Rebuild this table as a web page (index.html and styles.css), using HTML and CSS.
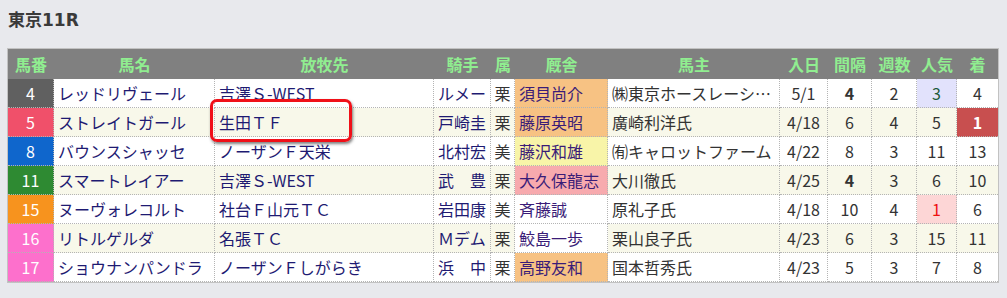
FILE: index.html
```html
<!DOCTYPE html>
<html lang="ja">
<head>
<meta charset="utf-8">
<title>東京11R</title>
<link rel="stylesheet" href="styles.css">
</head>
<body>
<div class="title">東京11R</div>
<div class="board">
  <table class="race">
    <thead>
      <tr>
        <th class="w-num">馬番</th>
        <th class="w-name">馬名</th>
        <th class="w-farm">放牧先</th>
        <th class="w-jockey">騎手</th>
        <th class="w-area">属</th>
        <th class="w-stable">厩舎</th>
        <th class="w-owner">馬主</th>
        <th class="w-in">入日</th>
        <th class="w-int">間隔</th>
        <th class="w-week">週数</th>
        <th class="w-pop">人気</th>
        <th class="w-fin">着</th>
      </tr>
    </thead>
    <tbody>
      <tr class="odd">
        <td class="num f4">4</td>
        <td class="name">レッドリヴェール</td>
        <td class="farm">吉澤Ｓ-WEST</td>
        <td class="jockey">ルメー</td>
        <td class="area">栗</td>
        <td class="stable st-orange">須貝尚介</td>
        <td class="owner">㈱東京ホースレーシ…</td>
        <td class="ctr">5/1</td>
        <td class="ctr strong">4</td>
        <td class="ctr">2</td>
        <td class="ctr pop-blue">3</td>
        <td class="ctr last">4</td>
      </tr>
      <tr class="even">
        <td class="num f5">5</td>
        <td class="name">ストレイトガール</td>
        <td class="farm">生田ＴＦ</td>
        <td class="jockey">戸崎圭</td>
        <td class="area">栗</td>
        <td class="stable st-orange">藤原英昭</td>
        <td class="owner">廣崎利洋氏</td>
        <td class="ctr">4/18</td>
        <td class="ctr">6</td>
        <td class="ctr">4</td>
        <td class="ctr">5</td>
        <td class="ctr last win">1</td>
      </tr>
      <tr class="odd">
        <td class="num f8">8</td>
        <td class="name">バウンスシャッセ</td>
        <td class="farm">ノーザンＦ天栄</td>
        <td class="jockey">北村宏</td>
        <td class="area">美</td>
        <td class="stable st-yellow">藤沢和雄</td>
        <td class="owner">㈲キャロットファーム</td>
        <td class="ctr">4/22</td>
        <td class="ctr">8</td>
        <td class="ctr">3</td>
        <td class="ctr">11</td>
        <td class="ctr last">13</td>
      </tr>
      <tr class="even">
        <td class="num f11">11</td>
        <td class="name">スマートレイアー</td>
        <td class="farm">吉澤Ｓ-WEST</td>
        <td class="jockey">武　豊</td>
        <td class="area">栗</td>
        <td class="stable st-pink">大久保龍志</td>
        <td class="owner">大川徹氏</td>
        <td class="ctr">4/25</td>
        <td class="ctr strong">4</td>
        <td class="ctr">3</td>
        <td class="ctr">6</td>
        <td class="ctr last">10</td>
      </tr>
      <tr class="odd">
        <td class="num f15">15</td>
        <td class="name">ヌーヴォレコルト</td>
        <td class="farm">社台Ｆ山元ＴＣ</td>
        <td class="jockey">岩田康</td>
        <td class="area">美</td>
        <td class="stable">斉藤誠</td>
        <td class="owner">原礼子氏</td>
        <td class="ctr">4/18</td>
        <td class="ctr">10</td>
        <td class="ctr">4</td>
        <td class="ctr pop-red">1</td>
        <td class="ctr last">6</td>
      </tr>
      <tr class="even">
        <td class="num f16">16</td>
        <td class="name">リトルゲルダ</td>
        <td class="farm">名張ＴＣ</td>
        <td class="jockey">Ｍデム</td>
        <td class="area">栗</td>
        <td class="stable">鮫島一歩</td>
        <td class="owner">栗山良子氏</td>
        <td class="ctr">4/23</td>
        <td class="ctr">6</td>
        <td class="ctr">3</td>
        <td class="ctr">15</td>
        <td class="ctr last">11</td>
      </tr>
      <tr class="odd">
        <td class="num f16">17</td>
        <td class="name">ショウナンパンドラ</td>
        <td class="farm">ノーザンＦしがらき</td>
        <td class="jockey">浜　中</td>
        <td class="area">栗</td>
        <td class="stable st-orange">高野友和</td>
        <td class="owner">国本哲秀氏</td>
        <td class="ctr">4/23</td>
        <td class="ctr">5</td>
        <td class="ctr">3</td>
        <td class="ctr">7</td>
        <td class="ctr last">8</td>
      </tr>
    </tbody>
  </table>
  <div class="highlight"></div>
</div>
</body>
</html>
```
FILE: styles.css
```css
html, body {
  margin: 0;
  padding: 0;
  background: #e8e9ed;
}

body {
  padding: 8px 8px 0 7px;
  font-family: "Noto Sans CJK JP", "Noto Sans", sans-serif;
  font-size: 16px;
  color: #333;
}

.title {
  padding-left: 1px;
  height: 24px;
  line-height: 24px;
  margin-bottom: 16px;
  font-family: "DejaVu Sans", "Noto Sans CJK JP", sans-serif;
  font-size: 17px;
  font-weight: bold;
  color: #3a3a3a;
}

.board {
  position: relative;
  width: 990px;
  border: 1px solid #c2c2c2;
  background: #fff;
}

.race {
  width: 990px;
  table-layout: fixed;
  border-collapse: separate;
  border-spacing: 0;
}

.race th,
.race td {
  box-sizing: border-box;
  padding: 0 4px;
  line-height: 20px;
  white-space: nowrap;
  overflow: hidden;
  vertical-align: middle;
}

.race thead tr {
  height: 30px;
}

.race th {
  background: #808080;
  color: #90ee90;
  font-weight: bold;
  text-align: center;
  padding: 0;
}

.w-num { width: 46px; }
.w-name { width: 161px; }
.w-farm { width: 219px; }
.w-jockey { width: 57px; }
.w-area { width: 24px; }
.w-stable { width: 93px; }
.w-owner { width: 172px; }
.w-in { width: 48px; }
.w-int { width: 44px; }
.w-week { width: 45px; }
.w-pop { width: 40px; }
.w-fin { width: 41px; }

.race tbody tr {
  height: 29px;
}

.race td {
  border-right: 1px dotted #b4b4b4;
  border-bottom: 1px dotted #b4b4b4;
}

.race td.last {
  border-right: none;
}

.odd td { background: #ffffff; }
.even td { background: #f8f8ea; }

.race td.num {
  text-align: center;
  color: #fff;
  padding: 0;
}

.race td.f4 { background: #606060; }
.race td.f5 { background: #f0506a; }
.race td.f8 { background: #0f66cc; }
.race td.f11 { background: #2e8a32; }
.race td.f15 { background: #f7931e; }
.race td.f16 { background: #fd70cc; }

.name,
.farm,
.jockey,
.stable {
  color: #1e1a72;
}

.area {
  text-align: center;
  padding: 0 !important;
}

.race td.stable { background: #ffffff; color: #3a1c78; }
.race td.st-orange { background: #f7c283; }
.race td.st-yellow { background: #f8f4a8; }
.race td.st-pink { background: #f7aaae; }

.owner {
  color: #333;
}

.ctr {
  text-align: center;
  padding: 0 !important;
  color: #333;
}

.strong {
  font-weight: bold;
}

.race td.pop-blue {
  background: #e2e2fc;
  color: #1d5a3a;
}

.race td.pop-red {
  background: #fdd6d6;
  color: #ee1111;
}

.race td.win {
  background: #c84f4f;
  color: #fff;
  font-weight: bold;
}

.highlight {
  position: absolute;
  left: 202px;
  top: 50px;
  width: 142px;
  height: 43px;
  box-sizing: border-box;
  border: 3px solid #f01018;
  border-radius: 7px;
  box-shadow: 1px 2px 3px rgba(0, 0, 0, 0.5);
}
```
